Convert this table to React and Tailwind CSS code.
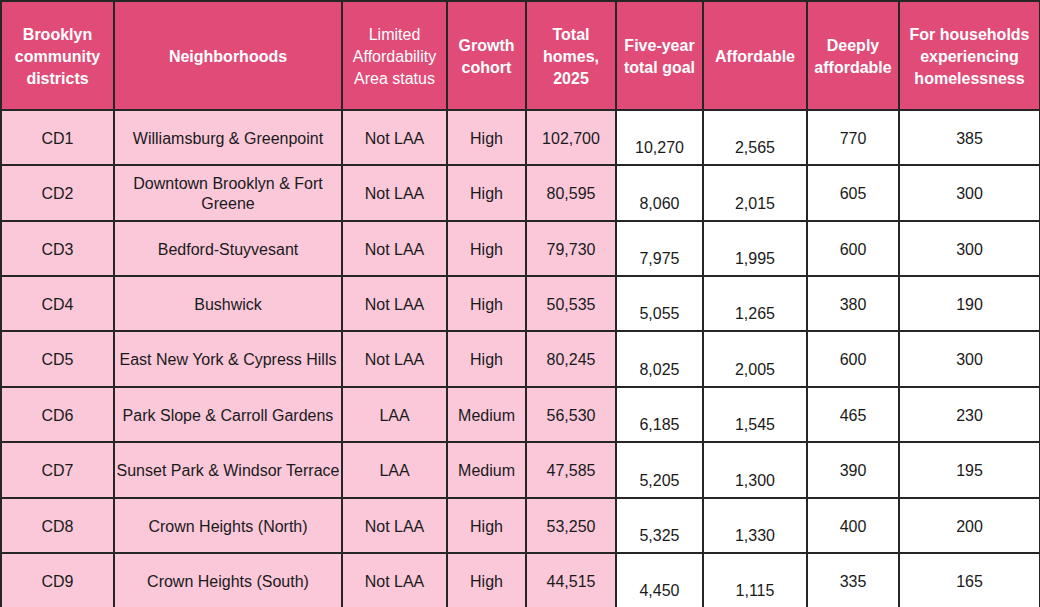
const rows = [
  ["CD1", "Williamsburg & Greenpoint", "Not LAA", "High", "102,700", "10,270", "2,565", "770", "385"],
  ["CD2", "Downtown Brooklyn & Fort Greene", "Not LAA", "High", "80,595", "8,060", "2,015", "605", "300"],
  ["CD3", "Bedford-Stuyvesant", "Not LAA", "High", "79,730", "7,975", "1,995", "600", "300"],
  ["CD4", "Bushwick", "Not LAA", "High", "50,535", "5,055", "1,265", "380", "190"],
  ["CD5", "East New York & Cypress Hills", "Not LAA", "High", "80,245", "8,025", "2,005", "600", "300"],
  ["CD6", "Park Slope & Carroll Gardens", "LAA", "Medium", "56,530", "6,185", "1,545", "465", "230"],
  ["CD7", "Sunset Park & Windsor Terrace", "LAA", "Medium", "47,585", "5,205", "1,300", "390", "195"],
  ["CD8", "Crown Heights (North)", "Not LAA", "High", "53,250", "5,325", "1,330", "400", "200"],
  ["CD9", "Crown Heights (South)", "Not LAA", "High", "44,515", "4,450", "1,115", "335", "165"],
];

const rowHeights = ["h-[55px]", "h-[56px]", "h-[55px]", "h-[55px]", "h-[56px]", "h-[55px]", "h-[56px]", "h-[55px]", "h-[55px]"];

const headers = [
  { label: "Brooklyn community districts", w: "w-[113px]" },
  { label: "Neighborhoods", w: "w-[228px]" },
  { label: "Limited Affordability Area status", w: "w-[105px]", light: true },
  { label: "Growth cohort", w: "w-[79px]" },
  { label: "Total homes, 2025", w: "w-[90px]" },
  { label: "Five-year total goal", w: "w-[87px]" },
  { label: "Affordable", w: "w-[104px]" },
  { label: "Deeply affordable", w: "w-[92px]" },
  { label: "For households experiencing homelessness", w: "w-[141px]" },
];

export default function App() {
  return (
    <div
      className="w-[1040px] h-[607px] overflow-hidden bg-white"
      style={{ fontFamily: '"Liberation Sans", Arial, sans-serif' }}
    >
      <table className="table-fixed border-collapse w-[1041px] text-[#1a1a1a]">
        <thead>
          <tr className="h-[109px] bg-[#e14b78] text-white">
            {headers.map((h) => (
              <th
                key={h.label}
                className={`${h.w} border-2 border-[#262626] px-1 pt-[2px] text-center align-middle text-[16px] leading-[22px] ${
                  h.light ? "font-normal" : "font-bold"
                }`}
              >
                {h.label}
              </th>
            ))}
          </tr>
        </thead>
        <tbody>
          {rows.map((r, i) => (
            <tr key={r[0]} className={`${rowHeights[i]} text-[16px] leading-[20px]`}>
              {r.map((c, j) => {
                const pink = j < 5;
                const bottom = j === 5 || j === 6;
                return (
                  <td
                    key={j}
                    className={`border-2 border-[#262626] text-center ${j === 1 ? "px-0" : "px-1"} ${
                      pink ? "bg-[#fbc8da]" : "bg-white"
                    } ${bottom ? "align-bottom pb-[6px]" : "align-middle pt-[2px]"}`}
                  >
                    {c}
                  </td>
                );
              })}
            </tr>
          ))}
        </tbody>
      </table>
    </div>
  );
}
